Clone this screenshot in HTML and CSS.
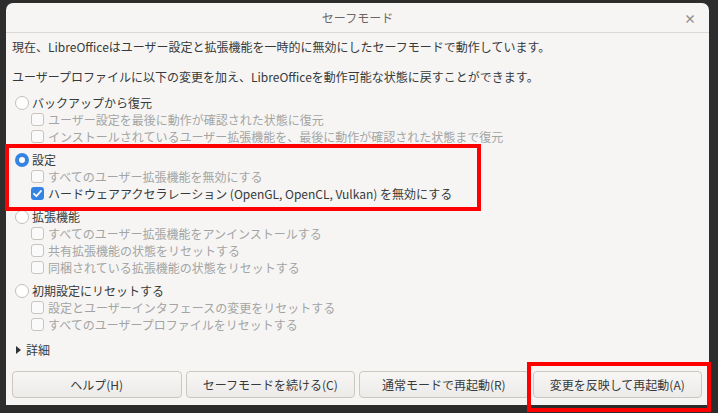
FILE: index.html
```html
<!DOCTYPE html>
<html lang="ja">
<head>
  <meta charset="UTF-8">
  <meta name="viewport" content="width=device-width, initial-scale=1.0">
  <title>セーフモード</title>
  <link rel="stylesheet" href="styles.css">
</head>
<body>
  <div class="dialog">
    <div class="titlebar">
      <span class="title">セーフモード</span>
      <span class="close">×</span>
    </div>
    <div class="body">
      <p class="intro">現在、LibreOfficeはユーザー設定と拡張機能を一時的に無効にしたセーフモードで動作しています。</p>
      <p class="intro second">ユーザープロファイルに以下の変更を加え、LibreOfficeを動作可能な状態に戻すことができます。</p>

      <div class="group">
        <div class="row radio-row"><span class="radio"></span>バックアップから復元</div>
        <div class="row check-row disabled"><span class="check"></span>ユーザー設定を最後に動作が確認された状態に復元</div>
        <div class="row check-row disabled"><span class="check"></span>インストールされているユーザー拡張機能を、最後に動作が確認された状態まで復元</div>
      </div>

      <div class="group">
        <div class="row radio-row"><span class="radio on"></span>設定</div>
        <div class="row check-row disabled"><span class="check"></span>すべてのユーザー拡張機能を無効にする</div>
        <div class="row check-row"><span class="check on"><svg width="13" height="13" viewBox="0 0 13 13"><path d="M3 6.8 L5.4 9.2 L10 4" fill="none" stroke="#fff" stroke-width="1.8" stroke-linecap="round" stroke-linejoin="round"/></svg></span>ハードウェアアクセラレーション (OpenGL, OpenCL, Vulkan) を無効にする</div>
      </div>

      <div class="group">
        <div class="row radio-row"><span class="radio"></span>拡張機能</div>
        <div class="row check-row disabled"><span class="check"></span>すべてのユーザー拡張機能をアンインストールする</div>
        <div class="row check-row disabled"><span class="check"></span>共有拡張機能の状態をリセットする</div>
        <div class="row check-row disabled"><span class="check"></span>同梱されている拡張機能の状態をリセットする</div>
      </div>

      <div class="group">
        <div class="row radio-row"><span class="radio"></span>初期設定にリセットする</div>
        <div class="row check-row disabled"><span class="check"></span>設定とユーザーインタフェースの変更をリセットする</div>
        <div class="row check-row disabled"><span class="check"></span>すべてのユーザープロファイルをリセットする</div>
      </div>

      <div class="row expander"><span class="arrow"></span>詳細</div>
    </div>

    <div class="buttons">
      <button class="btn">ヘルプ(H)</button>
      <button class="btn">セーフモードを続ける(C)</button>
      <button class="btn">通常モードで再起動(R)</button>
      <button class="btn">変更を反映して再起動(A)</button>
    </div>
  </div>

  <div class="mark mark-settings"></div>
  <div class="mark mark-apply"></div>
</body>
</html>
```

FILE: styles.css
```css
html, body {
  margin: 0;
  height: 100%;
}

body {
  background-color: #2d2d2d;
  font-family: "Noto Sans CJK JP", "Noto Sans", sans-serif;
  font-size: 12px;
  color: #363a3b;
  position: relative;
  overflow: hidden;
}

.dialog {
  position: relative;
  margin: 3px 0 0 6px;
  width: 703px;
  height: 402px;
  background-color: #f6f5f4;
  border-radius: 7px 7px 0 0;
  display: flex;
  flex-direction: column;
}

.titlebar {
  height: 29px;
  border-bottom: 1px solid #dcd8d5;
  display: flex;
  align-items: center;
  justify-content: center;
  position: relative;
}

.title {
  color: #6a6866;
  font-size: 12px;
}

.close {
  position: absolute;
  right: 13px;
  top: 7px;
  color: #8e8c8a;
  font-size: 12px;
  font-weight: bold;
}

.body {
  padding: 5px 6px 0 6px;
}

.intro {
  margin: 0;
  line-height: 18px;
}

.intro.second {
  margin-top: 12px;
}

.group {
  margin-top: 6px;
}

.intro.second + .group {
  margin-top: 8px;
}

.row {
  height: 17px;
  display: flex;
  align-items: center;
  white-space: nowrap;
}

.radio-row {
  padding-left: 3px;
}

.check-row {
  padding-left: 19px;
}

.disabled {
  color: #a3a5a4;
}

.radio {
  width: 14px;
  height: 14px;
  border: 1px solid #c3beb9;
  border-radius: 50%;
  background-color: #ffffff;
  margin-right: 3px;
  box-sizing: border-box;
  flex: none;
}

.radio.on {
  border: 4px solid #3584e4;
  background-color: #ffffff;
}

.check {
  width: 13px;
  height: 13px;
  border: 1px solid #c9c4bf;
  border-radius: 3px;
  background-color: #fbfafa;
  margin-right: 4px;
  box-sizing: border-box;
  flex: none;
  display: flex;
  align-items: center;
  justify-content: center;
}

.check.on {
  border: none;
  background-color: #3584e4;
}

.expander {
  margin-top: 8px;
  padding-left: 4px;
}

.arrow {
  width: 0;
  height: 0;
  border-top: 4px solid transparent;
  border-bottom: 4px solid transparent;
  border-left: 5px solid #2e3436;
  margin-right: 5px;
}

.buttons {
  margin-top: auto;
  padding: 0 7px 7px 6px;
  display: grid;
  grid-template-columns: repeat(4, 1fr);
  gap: 4px;
}

.btn {
  height: 27px;
  font-family: inherit;
  font-size: 12px;
  color: #363a3b;
  background: linear-gradient(to bottom, #f7f6f5, #edebe9);
  border: 1px solid #cdc7c2;
  border-radius: 4px;
  padding: 0;
}

.mark {
  position: absolute;
  border: 4px solid #ff0000;
  box-sizing: border-box;
}

.mark-settings {
  left: 5px;
  top: 144px;
  width: 476px;
  height: 67px;
}

.mark-apply {
  left: 527px;
  top: 362px;
  width: 184px;
  height: 50px;
}
```
